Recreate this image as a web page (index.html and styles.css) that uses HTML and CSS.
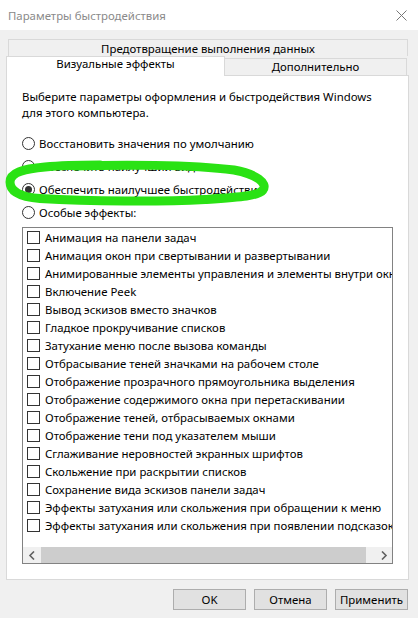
FILE: index.html
```html
<!DOCTYPE html>
<html lang="ru">
<head>
<meta charset="utf-8">
<title>Параметры быстродействия</title>
<link rel="stylesheet" href="styles.css">
</head>
<body>
<div class="window">
  <div class="titlebar">
    <span class="title">Параметры быстродействия</span>
    <svg class="close" width="11" height="11" viewBox="0 0 11 11"><path d="M0.5 0.5 L10.5 10.5 M10.5 0.5 L0.5 10.5" stroke="#777" stroke-width="1" fill="none"/></svg>
  </div>
  <div class="content">
    <div class="tabrow1">Предотвращение выполнения данных</div>
    <div class="tabrow2">
      <div class="tab selected">Визуальные эффекты</div>
      <div class="tab">Дополнительно</div>
    </div>
    <div class="panel">
      <p class="desc">Выберите параметры оформления и быстродействия Windows<br>для этого компьютера.</p>
      <div class="radios">
        <div class="radio"><span class="rb"></span>Восстановить значения по умолчанию</div>
        <div class="radio"><span class="rb"></span>Обеспечить наилучший вид</div>
        <div class="radio"><span class="rb checked"></span>Обеспечить наилучшее быстродействие</div>
        <div class="radio"><span class="rb"></span>Особые эффекты:</div>
      </div>
      <div class="list">
        <div class="items">
          <div class="item"><span class="cb"></span>Анимация на панели задач</div>
          <div class="item"><span class="cb"></span>Анимация окон при свертывании и развертывании</div>
          <div class="item"><span class="cb"></span>Анимированные элементы управления и элементы внутри окна</div>
          <div class="item"><span class="cb"></span>Включение Peek</div>
          <div class="item"><span class="cb"></span>Вывод эскизов вместо значков</div>
          <div class="item"><span class="cb"></span>Гладкое прокручивание списков</div>
          <div class="item"><span class="cb"></span>Затухание меню после вызова команды</div>
          <div class="item"><span class="cb"></span>Отбрасывание теней значками на рабочем столе</div>
          <div class="item"><span class="cb"></span>Отображение прозрачного прямоугольника выделения</div>
          <div class="item"><span class="cb"></span>Отображение содержимого окна при перетаскивании</div>
          <div class="item"><span class="cb"></span>Отображение теней, отбрасываемых окнами</div>
          <div class="item"><span class="cb"></span>Отображение тени под указателем мыши</div>
          <div class="item"><span class="cb"></span>Сглаживание неровностей экранных шрифтов</div>
          <div class="item"><span class="cb"></span>Скольжение при раскрытии списков</div>
          <div class="item"><span class="cb"></span>Сохранение вида эскизов панели задач</div>
          <div class="item"><span class="cb"></span>Эффекты затухания или скольжения при обращении к меню</div>
          <div class="item"><span class="cb"></span>Эффекты затухания или скольжения при появлении подсказок</div>
        </div>
        <div class="hscroll">
          <div class="arrow"><svg width="8" height="9" viewBox="0 0 8 9"><path d="M6 0.5 L2 4.5 L6 8.5" stroke="#606060" stroke-width="1.6" fill="none"/></svg></div>
          <div class="track"><div class="thumb"></div></div>
          <div class="arrow"><svg width="8" height="9" viewBox="0 0 8 9"><path d="M2 0.5 L6 4.5 L2 8.5" stroke="#606060" stroke-width="1.6" fill="none"/></svg></div>
        </div>
      </div>
    </div>
    <div class="buttons">
      <div class="btn">OK</div>
      <div class="btn">Отмена</div>
      <div class="btn">Применить</div>
    </div>
  </div>
  <svg class="marker" width="280" height="64" viewBox="0 150 280 64">
    <path d="M75 166 C120 164.5, 190 164.5, 234 170 C256 174, 268 183, 263 190 C258 196, 242 197, 205 199.5 C160 202, 90 201.5, 40 198.5 C20 197, 10 191, 10 182 C10 173, 22 169, 45 167 C60 165.5, 80 165, 100 165" stroke="#2ae214" stroke-width="9" fill="none" stroke-linecap="round" stroke-linejoin="round"/>
  </svg>
</div>
</body>
</html>
```

FILE: styles.css
```css
html, body {
  margin: 0;
  padding: 0;
}
body {
  font-family: "Noto Sans", "Open Sans", sans-serif;
  font-size: 11.4px;
  color: #000;
  background: #f0f0f0;
}
.window {
  position: relative;
  width: 418px;
  height: 618px;
  background: #f0f0f0;
  overflow: hidden;
}
.titlebar {
  height: 30px;
  background: #fff;
  display: flex;
  align-items: center;
  justify-content: space-between;
  padding: 0 11px 0 8px;
  box-sizing: border-box;
}
.title {
  color: #8a8a8a;
}
.close {
  display: block;
}
.content {
  padding: 9px 9px 0 6px;
}
.tabrow1 {
  margin: 0 1px 0 2px;
  height: 17px;
  box-sizing: border-box;
  border: 1px solid #d9d9d9;
  border-bottom: none;
  padding-top: 1px;
  text-align: center;
  line-height: 16px;
}
.tabrow2 {
  display: flex;
  align-items: flex-end;
  height: 20px;
  position: relative;
  z-index: 1;
  margin-bottom: -1px;
}
.tab {
  box-sizing: border-box;
  text-align: center;
}
.tab.selected {
  width: 219px;
  height: 20px;
  background: #fff;
  border: 1px solid #d9d9d9;
  border-bottom: none;
  line-height: 14px;
}
.tab:not(.selected) {
  flex: 1;
  margin-right: 2px;
  height: 18px;
  border: 1px solid #d9d9d9;
  border-left: none;
  line-height: 16px;
}
.panel {
  background: #fff;
  border: 1px solid #d9d9d9;
  height: 505px;
  box-sizing: border-box;
  padding: 13px 0 0 15px;
}
.desc {
  margin: 0;
  line-height: 16px;
}
.radios {
  margin-top: 11px;
}
.radio {
  height: 23px;
  display: flex;
  align-items: center;
  white-space: nowrap;
}
.rb {
  width: 13px;
  height: 13px;
  box-sizing: border-box;
  border: 1px solid #333;
  border-radius: 50%;
  margin-right: 4px;
  display: flex;
  align-items: center;
  justify-content: center;
  flex: none;
}
.rb.checked::after {
  content: "";
  width: 7px;
  height: 7px;
  border-radius: 50%;
  background: #333;
}
.list {
  margin-top: 3px;
  width: 371px;
  height: 337px;
  box-sizing: border-box;
  border: 1px solid #828282;
  background: #fff;
  display: flex;
  flex-direction: column;
}
.items {
  height: 319px;
  overflow: hidden;
  flex: none;
}
.item {
  height: 18px;
  display: flex;
  align-items: center;
  white-space: nowrap;
  padding-left: 4px;
}
.cb {
  width: 13px;
  height: 13px;
  box-sizing: border-box;
  border: 1px solid #333;
  margin-right: 5px;
  flex: none;
  background: #fff;
}
.hscroll {
  height: 16px;
  background: #f0f0f0;
  display: flex;
  align-items: stretch;
}
.arrow {
  width: 17px;
  display: flex;
  align-items: center;
  justify-content: center;
  flex: none;
}
.track {
  flex: 1;
  display: flex;
  align-items: stretch;
  padding-right: 9px;
}
.thumb {
  flex: 1;
  margin-left: 1px;
  background: #cdcdcd;
}
.buttons {
  display: flex;
  justify-content: flex-end;
  gap: 8px;
  margin-top: 9px;
  padding-right: 1px;
}
.btn {
  width: 73px;
  height: 21px;
  box-sizing: border-box;
  border: 1px solid #adadad;
  background: #e1e1e1;
  display: flex;
  align-items: center;
  justify-content: center;
}
.marker {
  position: absolute;
  left: 0;
  top: 150px;
  pointer-events: none;
}
```
